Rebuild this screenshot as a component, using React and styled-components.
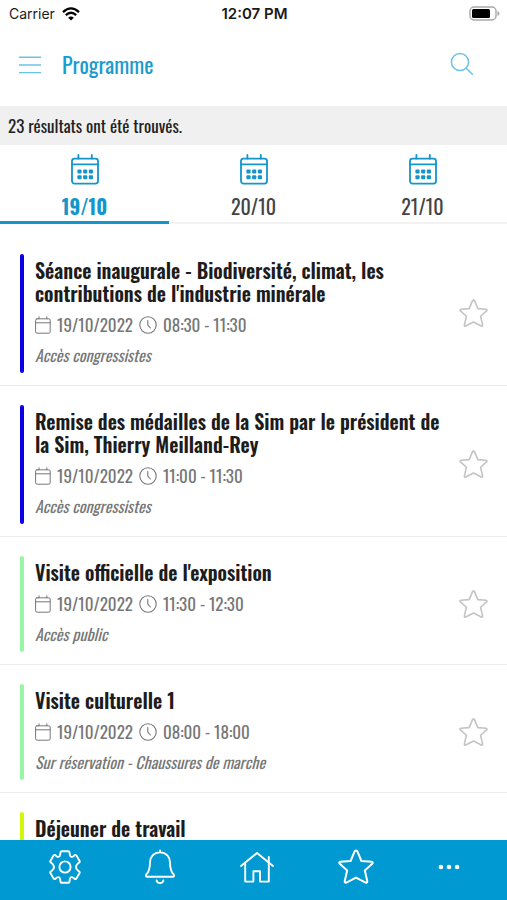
import React, { useState } from 'react'
import styled, { createGlobalStyle } from 'styled-components'

const GlobalStyle = createGlobalStyle`
    * {
        box-sizing: border-box;
    }
    body {
        margin: 0;
        background: #ffffff;
        color: #222222;
        font-family: Oswald, "Roboto Condensed", "Open Sans Condensed", "Liberation Sans Narrow", "Arial Narrow", "Liberation Sans", sans-serif;
    }
    h1, h2, p {
        margin: 0;
    }
    button {
        margin: 0;
        padding: 0;
        border: none;
        background: transparent;
        font-family: inherit;
        color: inherit;
        cursor: pointer;
    }
    svg {
        display: block;
        flex: none;
    }
`
const Screen = styled.div`
    display: flex;
    flex-direction: column;
    height: 100vh;
    overflow: hidden;
`
const StatusBar = styled.div`
    display: grid;
    grid-template-columns: 1fr auto 1fr;
    align-items: center;
    height: 27px;
    padding: 0 7px 0 9px;
    font-family: Inter, "Liberation Sans", sans-serif;
    font-size: 14px;
    color: #1a1a1a;
`
const Carrier = styled.div`
    display: flex;
    align-items: center;
    gap: 7px;
`
const Clock = styled.div`
    font-size: 15px;
    line-height: 18px;
    font-weight: 600;
`
const BatterySlot = styled.div`
    display: flex;
    justify-content: flex-end;
`
const Header = styled.header`
    display: flex;
    align-items: center;
    height: 79px;
    padding: 0 33px 6px 19px;
`
const HeaderButton = styled.button`
    color: #6cc2e2;
`
const PageTitle = styled.h1`
    flex: 1;
    margin-left: 21px;
    font-size: 22px;
    line-height: 32px;
    font-weight: 400;
    color: #1c9bcd;
`
const Results = styled.p`
    padding: 8px 8px 7px;
    background: #f0f0f0;
    font-size: 17px;
    line-height: 24px;
`
const Tabs = styled.div`
    display: grid;
    grid-template-columns: repeat(3, 1fr);
    border-bottom: 2px solid #f3f3f3;
`
const Tab = styled.button`
    display: flex;
    flex-direction: column;
    align-items: center;
    gap: 9px;
    padding: 8px 0 3px;
    margin-bottom: -2px;
    border-bottom: 3px solid ${({ $active }) => ($active ? '#1496cb' : 'transparent')};
    color: ${({ $active }) => ($active ? '#1496cb' : '#444444')};
    font-size: 20px;
    line-height: 24px;
    font-weight: ${({ $active }) => ($active ? 700 : 400)};

    svg {
        color: #1496cb;
    }
`
const List = styled.main`
    flex: 1;
    min-height: 0;
    overflow-y: auto;
    padding-top: 11px;
    scrollbar-width: none;
`
const Session = styled.article`
    display: flex;
    align-items: center;
    padding: 19px 19px 12px 20px;
    border-bottom: 1px solid #ebebeb;
`
const Stripe = styled.div`
    align-self: stretch;
    width: 4px;
    margin-right: 11px;
    border-radius: 2px;
    background: ${({ $color }) => $color};
`
const Content = styled.div`
    flex: 1;
    padding: 5px 0 8px;
    margin-right: 8px;
    color: #777777;
`
const Title = styled.h2`
    font-size: 20px;
    line-height: 23px;
    font-weight: 600;
    color: #1c1c1c;
    white-space: pre-line;
`
const Meta = styled.div`
    display: flex;
    align-items: center;
    gap: 6px;
    margin: 8px 0;
    font-size: 17px;
    line-height: 24px;
`
const Note = styled.p`
    font-size: 16px;
    line-height: 20px;
    font-style: italic;
`
const FavButton = styled.button`
    color: #c4c4c4;
`
const BottomBar = styled.nav`
    display: flex;
    justify-content: space-between;
    align-items: center;
    height: 60px;
    padding: 0 47px 6px 49px;
    background: #0099d1;
    color: #ffffff;
`

const line = {
    fill: 'none',
    stroke: 'currentColor',
    strokeLinejoin: 'round',
    strokeLinecap: 'round',
}

const WifiIcon = () => (
    <svg width="18" height="14" viewBox="0 0 18 14" fill="none" stroke="#000" strokeWidth="2.3">
        <path d="M1 5.2 Q9 -2.4 17 5.2" />
        <path d="M3.8 8.2 Q9 3.4 14.2 8.2" />
        <path d="M9 13.6 L6.2 10.7 Q9 8.4 11.8 10.7 Z" fill="#000" stroke="none" />
    </svg>
)

const BatteryIcon = () => (
    <svg width="31" height="15" viewBox="0 0 31 15">
        <rect x="1" y="1" width="26" height="13" rx="4" fill="none" stroke="#a8a8a8" strokeWidth="1.4" />
        <rect x="3" y="3" width="18" height="9" rx="1.5" fill="#000" />
        <path d="M28.5 5 Q30.5 5.6 30.5 7.5 Q30.5 9.4 28.5 10 Z" fill="#a8a8a8" />
    </svg>
)

const MenuIcon = () => (
    <svg width="22" height="20" viewBox="0 0 22 20" fill="none" stroke="currentColor" strokeWidth="1.4">
        <path d="M0 3.2 H22 M0 11 H22 M0 18.6 H22" />
    </svg>
)

const SearchIcon = () => (
    <svg width="24" height="24" viewBox="0 0 24 24" {...line} strokeWidth="1.5">
        <circle cx="10" cy="10" r="8.6" />
        <path d="M16.2 16.2 L22.4 22.2" />
    </svg>
)

const CalendarIcon = () => (
    <svg width="28" height="32" viewBox="0 0 28 32" {...line} strokeWidth="1.8">
        <rect x="1" y="5.6" width="26" height="25" rx="2.5" />
        <path d="M1 11.4 H27 M7.4 2 V5.6 M20.8 2 V5.6" />
        <g fill="currentColor" stroke="none">
            {[6.4, 12.1, 17.8].map((x) => (
                <React.Fragment key={x}>
                    <rect x={x} y="16.4" width="4.2" height="4" rx="1" />
                    <rect x={x} y="22.2" width="4.2" height="4" rx="1" />
                </React.Fragment>
            ))}
        </g>
    </svg>
)

const DateIcon = () => (
    <svg width="16" height="18" viewBox="0 0 16 18" {...line} strokeWidth="1">
        <rect x="0.6" y="2.8" width="14.6" height="14.4" rx="1.4" />
        <path d="M0.6 6.8 H15.2 M4 0.8 V2.8 M11.8 0.8 V2.8" />
    </svg>
)

const TimeIcon = () => (
    <svg width="18" height="18" viewBox="0 0 18 18" {...line} strokeWidth="1.1">
        <circle cx="9" cy="9" r="8.2" />
        <path d="M8.8 4.6 V9.2 L11.4 12" />
    </svg>
)

const StarIcon = ({ size, weight }) => (
    <svg width={size} height={size} viewBox="0 0 36 36" {...line} strokeWidth={weight}>
        <path d="M18 1.4 Q19 1.4 19.5 2.6 L23.4 12 L33.6 12.8 Q35.6 13.2 34.2 14.8 L26.8 21.4 L29.2 31.8 Q29.6 34 27.6 33.6 L18 28.6 L8.4 33.6 Q6.4 34 6.8 31.8 L9.2 21.4 L1.8 14.8 Q0.4 13.2 2.4 12.8 L12.6 12 L16.5 2.6 Q17 1.4 18 1.4 Z" />
    </svg>
)

const GearIcon = () => (
    <svg width="32" height="34" viewBox="0 0 32 34" {...line} strokeWidth="1.9">
        <path d="M12.6 1.2 H19.4 Q20.2 1.2 20.4 2 L20.8 4.4 Q21.4 8.2 24.4 6.2 L25.6 5.2 Q26.8 4.6 27.5 5.6 L30.6 11 Q31.1 11.9 30.2 12.5 L28.6 13.8 Q25.4 17 28.6 20.2 L30.2 21.5 Q31.1 22.1 30.6 23 L27.5 28.4 Q26.8 29.4 25.6 28.8 L24.4 27.8 Q21.4 25.8 20.8 29.6 L20.4 32 Q20.2 32.8 19.4 32.8 H12.6 Q11.8 32.8 11.6 32 L11.2 29.6 Q10.6 25.8 7.6 27.8 L6.4 28.8 Q5.2 29.4 4.5 28.4 L1.4 23 Q0.9 22.1 1.8 21.5 L3.4 20.2 Q6.6 17 3.4 13.8 L1.8 12.5 Q0.9 11.9 1.4 11 L4.5 5.6 Q5.2 4.6 6.4 5.2 L7.6 6.2 Q10.6 8.2 11.2 4.4 L11.6 2 Q11.8 1.2 12.6 1.2 Z" />
        <circle cx="16" cy="17" r="5.6" />
    </svg>
)

const BellIcon = () => (
    <svg width="30" height="36" viewBox="0 0 30 36" {...line} strokeWidth="1.9">
        <path d="M15 1.4 V3.4 M15 3.4 C8.6 3.4 5 8.2 5 13.4 C5 20.6 3.8 22.8 1.5 25.2 C0.4 26.8 1 27.8 2.4 27.8 H27.6 C29 27.8 29.6 26.8 28.5 25.2 C26.2 22.8 25 20.6 25 13.4 C25 8.2 21.4 3.4 15 3.4 Z" />
        <path d="M11.6 31.4 C12.2 35 17.8 35 18.4 31.4" />
    </svg>
)

const HomeIcon = () => (
    <svg width="34" height="34" viewBox="0 0 34 34" {...line} strokeWidth="1.9">
        <path d="M1 16 L17 3 L33 16" />
        <path d="M5.2 13.4 V31.6 H13.4 V21.2 H20 V31.6 H28.8 V7" />
    </svg>
)

const DotsIcon = () => (
    <svg width="22" height="8" viewBox="0 0 22 8" fill="currentColor">
        <circle cx="2.9" cy="4" r="2.3" />
        <circle cx="11" cy="4" r="2.3" />
        <circle cx="19.1" cy="4" r="2.3" />
    </svg>
)

const days = ['19/10', '20/10', '21/10']

const sessions = [
    {
        title: "Séance inaugurale - Biodiversité, climat, les\ncontributions de l'industrie minérale",
        time: '08:30 - 11:30',
        note: 'Accès congressistes',
        color: '#0c00e6',
    },
    {
        title: 'Remise des médailles de la Sim par le président de\nla Sim, Thierry Meilland-Rey',
        time: '11:00 - 11:30',
        note: 'Accès congressistes',
        color: '#0c00e6',
    },
    {
        title: "Visite officielle de l'exposition",
        time: '11:30 - 12:30',
        note: 'Accès public',
        color: '#98f5a5',
    },
    {
        title: 'Visite culturelle 1',
        time: '08:00 - 18:00',
        note: 'Sur réservation - Chaussures de marche',
        color: '#98f5a5',
    },
    {
        title: 'Déjeuner de travail',
        color: '#d2f50a',
    },
]

const App = () => {

    const [day, setDay] = useState('19/10');

  return (
    <Screen>
        <GlobalStyle />
        <StatusBar>
            <Carrier>
                <span>Carrier</span>
                <WifiIcon />
            </Carrier>
            <Clock>12:07 PM</Clock>
            <BatterySlot>
                <BatteryIcon />
            </BatterySlot>
        </StatusBar>
        <Header>
            <HeaderButton aria-label="Menu"><MenuIcon /></HeaderButton>
            <PageTitle>Programme</PageTitle>
            <HeaderButton aria-label="Rechercher"><SearchIcon /></HeaderButton>
        </Header>
        <Results>23 résultats ont été trouvés.</Results>
        <Tabs role="tablist">
            {days.map((d) => (
                <Tab key={d} role="tab" aria-selected={d === day} $active={d === day} onClick={() => setDay(d)}>
                    <CalendarIcon />
                    {d}
                </Tab>
            ))}
        </Tabs>
        <List>
            {sessions.map((session) => (
                <Session key={session.title}>
                    <Stripe $color={session.color} />
                    <Content>
                        <Title>{session.title}</Title>
                        {session.time && (
                            <Meta>
                                <DateIcon />
                                <span>19/10/2022</span>
                                <TimeIcon />
                                <span>{session.time}</span>
                            </Meta>
                        )}
                        {session.note && <Note>{session.note}</Note>}
                    </Content>
                    {session.time && (
                        <FavButton aria-label="Ajouter aux favoris">
                            <StarIcon size={29} weight={2} />
                        </FavButton>
                    )}
                </Session>
            ))}
        </List>
        <BottomBar>
            <button aria-label="Réglages"><GearIcon /></button>
            <button aria-label="Notifications"><BellIcon /></button>
            <button aria-label="Accueil"><HomeIcon /></button>
            <button aria-label="Favoris"><StarIcon size={36} weight={2} /></button>
            <button aria-label="Plus"><DotsIcon /></button>
        </BottomBar>
    </Screen>
  )
}

export default App
